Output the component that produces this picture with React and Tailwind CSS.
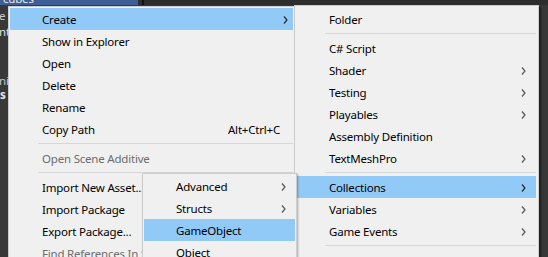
import React from 'react';

const Arrow = ({ dark }) => (
    <svg width="5" height="8" viewBox="0 0 5 8" className="shrink-0">
        <polyline points="1,0.5 4,4 1,7.5" fill="none" stroke={dark ? '#2a2a2a' : '#555555'} strokeWidth="1.2" />
    </svg>
);

function Row({ label, active, disabled, arrow, shortcut, arrowPad = 'pr-[5px]' }) {
    return (
        <div className={`flex h-[22px] items-center justify-between pl-[32px] pt-px ${arrowPad} ${active ? 'bg-[#91c9f7]' : ''}`}>
            <span className={`whitespace-nowrap ${disabled ? 'text-[#6d6d6d]' : 'text-black'}`}>{label}</span>
            {arrow && <Arrow dark={active} />}
            {shortcut && <span className="whitespace-nowrap text-black pr-[8px]">{shortcut}</span>}
        </div>
    );
}

const Sep = () => (
    <div className="flex h-[7px] items-center pl-[28px]">
        <div className="h-px w-full bg-[#d7d7d7]" />
    </div>
);

export default function App() {
    return (
        <div className="relative h-[257px] w-[548px] overflow-hidden bg-[#383838] text-[11.5px] tracking-[-0.2px] font-['Noto_Sans',sans-serif]">
            {/* editor bits behind the menus */}
            <div className="flex h-[5px] overflow-hidden bg-[#2d2d2d]">
                <div className="w-[138px] bg-[#3d5f95] pl-[3px]">
                    <div className="-mt-[9px] leading-[16px] text-[#e6e6e6]">cubes</div>
                </div>
                <div className="ml-[4px] w-[2px] bg-[#111]" />
            </div>
            <div className="flex flex-col pt-[3px] leading-[16px] text-[#c8c8c8]">
                <div className="-ml-[1px]">e</div>
                <div className="-ml-[1px] text-[#e0e0e0]">nt</div>
                <div className="mt-[34px] h-[14px] -ml-[1px] leading-[14px]">ni</div>
                <div className="h-[14px] font-bold leading-[14px] text-[#e8e8e8]">s</div>
            </div>

            {/* project context menu */}
            <div className="absolute left-[8px] top-[6px] w-[287px] border border-[#cccccc] bg-[#f0f0f0] p-px">
                <Row label="Create" active arrow />
                <Row label="Show in Explorer" />
                <Row label="Open" />
                <Row label="Delete" />
                <Row label="Rename" />
                <Row label="Copy Path" shortcut="Alt+Ctrl+C" />
                <Sep />
                <Row label="Open Scene Additive" disabled />
                <Sep />
                <Row label="Import New Asset..." />
                <Row label="Import Package" arrow />
                <Row label="Export Package..." />
                <Row label="Find References In Scene" disabled />
            </div>

            {/* Create submenu */}
            <div className="absolute left-[294px] top-[5px] w-[245px] border border-[#cccccc] bg-[#f0f0f0] px-[2px] pt-[2px] shadow-[2px_2px_2px_rgba(0,0,0,0.45)]">
                <Row label="Folder" />
                <Sep />
                <Row label="C# Script" />
                <Row label="Shader" arrow arrowPad="pr-[10px]" />
                <Row label="Testing" arrow arrowPad="pr-[10px]" />
                <Row label="Playables" arrow arrowPad="pr-[10px]" />
                <Row label="Assembly Definition" />
                <Row label="TextMeshPro" arrow arrowPad="pr-[10px]" />
                <Sep />
                <Row label="Collections" active arrow arrowPad="pr-[10px]" />
                <Row label="Variables" arrow arrowPad="pr-[10px]" />
                <Row label="Game Events" arrow arrowPad="pr-[10px]" />
                <Sep />
                <Row label="Scene" />
            </div>

            {/* Collections submenu */}
            <div className="absolute left-[142px] top-[173px] w-[155px] border border-[#cccccc] bg-[#f0f0f0] p-px shadow-[1px_1px_2px_rgba(0,0,0,0.3)]">
                <Row label="Advanced" arrow arrowPad="pr-[9px]" />
                <Row label="Structs" arrow arrowPad="pr-[9px]" />
                <Row label="GameObject" active />
                <Row label="Object" />
            </div>
        </div>
    );
}
